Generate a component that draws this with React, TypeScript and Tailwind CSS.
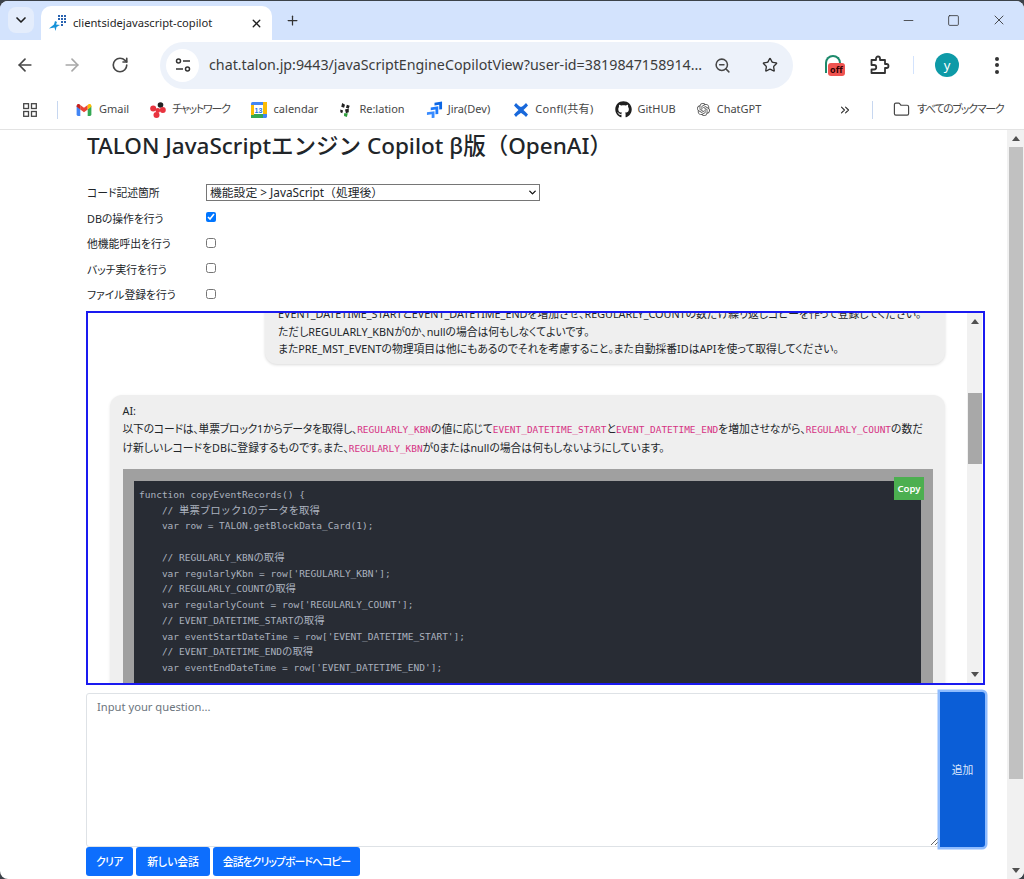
import { ArrowLeft, ArrowRight, ChevronDown, ChevronsRight, Folder, Minus, Plus, RotateCw, Square, Star, X, ZoomOut } from "lucide-react";
import { FaGithub } from "react-icons/fa";
import { SiOpenai } from "react-icons/si";

const sans = "font-['Noto_Sans','Noto_Sans_CJK_JP',sans-serif]";

const codeLines = [
  "function copyEventRecords() {",
  "    // 単票ブロック1のデータを取得",
  "    var row = TALON.getBlockData_Card(1);",
  "",
  "    // REGULARLY_KBNの取得",
  "    var regularlyKbn = row['REGULARLY_KBN'];",
  "    // REGULARLY_COUNTの取得",
  "    var regularlyCount = row['REGULARLY_COUNT'];",
  "    // EVENT_DATETIME_STARTの取得",
  "    var eventStartDateTime = row['EVENT_DATETIME_START'];",
  "    // EVENT_DATETIME_ENDの取得",
  "    var eventEndDateTime = row['EVENT_DATETIME_END'];",
];

// japanese runs sit a bit larger than the mono latin in the code block
function CodeLine({ text }: { text: string }) {
  const parts = text.split(/([\u3000-\u9fff]+)/);
  return (
    <div className="h-[15.750px]">
      {parts.map((p, i) => (i % 2 === 1 ? <span key={i} className="text-[10.400px]">{p}</span> : p))}
    </div>
  );
}

function Kbd({ children }: { children: string }) {
  return <code className="font-['DejaVu_Sans_Mono','Noto_Sans_CJK_JP',monospace] text-[9.450px] leading-none tracking-normal text-[#d63384]">{children}</code>;
}

function GmailIcon() {
  return (
    <svg viewBox="0 0 16 13" className="h-[12px] w-[16px]">
      <path d="M0 2v9.5A1.5 1.5 0 0 0 1.5 13H4V6z" fill="#4285f4" />
      <path d="M16 2v9.5a1.5 1.5 0 0 1-1.500 1.500H12V6z" fill="#34a853" />
      <path d="M4 6 8 9l4-3V1l-4 3-4-3z" fill="#ea4335" />
      <path d="M0 2c0-1.800 2-2.600 3-1.800L4 1v5L0 3z" fill="#c5221f" />
      <path d="M16 2c0-1.800-2-2.600-3-1.800L12 1v5l4-3z" fill="#fbbc04" />
    </svg>
  );
}

function ChatworkIcon() {
  return (
    <svg viewBox="0 0 16 16" className="h-4 w-4">
      <circle cx="10.500" cy="3" r="2.800" fill="#222" />
      <circle cx="3.200" cy="6.500" r="3" fill="#e8343f" />
      <circle cx="12.800" cy="8" r="3" fill="#e8343f" />
      <circle cx="7.800" cy="8.500" r="2.400" fill="#e8343f" />
      <circle cx="6.500" cy="13" r="3" fill="#e8343f" />
    </svg>
  );
}

function CalendarIcon() {
  return (
    <svg viewBox="0 0 16 16" className="h-4 w-4">
      <rect x="0" y="0" width="16" height="16" rx="1.500" fill="#4285f4" />
      <rect x="0" y="12" width="12" height="4" fill="#34a853" />
      <rect x="0" y="3" width="3" height="10" fill="#fbbc04" />
      <rect x="12" y="0" width="4" height="12" fill="#fbbc04" />
      <rect x="3" y="3" width="9" height="9" fill="#fff" />
      <text x="7.500" y="10.500" fontSize="7" fontWeight="700" textAnchor="middle" fill="#1a73e8" fontFamily="Liberation Sans">13</text>
    </svg>
  );
}

function RelationIcon() {
  return (
    <svg viewBox="0 0 12 16" className="h-[15px] w-[12px]">
      <path d="M3 1l3 2-1 3-3-1zM8 3l3 1-1 3-3-1zM1 8l3 1-1 3-2-1z" fill="#222" />
      <path d="M6 8l4-1 0 4-3 1z" fill="#222" />
      <path d="M5 12l4 0-1 4-3-1z" fill="#2e9e3c" />
    </svg>
  );
}

function JiraIcon() {
  return (
    <svg viewBox="0 0 18 18" className="h-[17px] w-[17px]">
      <path d="M9 1h8v8h-3V4H9z" fill="#0c66e4" transform="skewY(-8) translate(0 2)" />
      <path d="M5 5.500h8v8h-3v-5H5z" fill="#1d7afc" transform="skewY(-8) translate(0 2)" />
      <path d="M1 10h8v7H6v-4H1z" fill="#388bff" transform="skewY(-8) translate(0 2)" />
    </svg>
  );
}

function ConflIcon() {
  return (
    <svg viewBox="0 0 16 16" className="h-4 w-4">
      <path d="M1 3.500 3 1c3 3 4.500 4 5 4s2-1 5-4l2 2.500C12 6.500 11 7.500 10.500 8c.5.500 1.500 1.500 4.500 4.500L13 15c-3-3-4.500-4-5-4s-2 1-5 4l-2-2.500C4 9.500 5 8.500 5.500 8 5 7.500 4 6.500 1 3.500z" fill="#1868db" />
    </svg>
  );
}

function TalonIcon() {
  return (
    <svg viewBox="0 0 17 17" className="h-[17px] w-[17px]">
      <g fill="#2a63b0">
        <rect x="9" y="0" width="2" height="2" /><rect x="12" y="0" width="2" height="2" /><rect x="15" y="0" width="2" height="2" />
        <rect x="9" y="3" width="2" height="2" /><rect x="12" y="3" width="2" height="2" /><rect x="15" y="3" width="2" height="2" />
        <rect x="12" y="6" width="2" height="2" /><rect x="15" y="6" width="2" height="2" />
        <rect x="12" y="9" width="2" height="2" />
      </g>
      <path d="M0 13.500 5 9.500l1-3.500 2 1-1 2.500 4 .5-3.500 2-1 4-1-3.500z" fill="#1792d8" />
    </svg>
  );
}

function TuneIcon() {
  return (
    <svg viewBox="0 0 16 16" className="h-4 w-4" fill="none" stroke="#333" strokeWidth="1.500">
      <circle cx="3.500" cy="4" r="2" />
      <path d="M8 4h7" />
      <circle cx="12.500" cy="12" r="2" />
      <path d="M1 12h7" />
    </svg>
  );
}

function PuzzleIcon() {
  return (
    <svg viewBox="0 0 20 20" className="h-5 w-5" fill="none" stroke="#333" strokeWidth="1.800" strokeLinejoin="round">
      <path d="M1.500 5H6V3.500a2 2 0 0 1 4 0V5h5v4h1.500a2 2 0 0 1 0 4H15v5H1.500v-3.500H4a2.200 2.200 0 0 0 0-4.500H1.500z" />
    </svg>
  );
}

function AppsIcon() {
  return (
    <svg viewBox="0 0 14 14" className="h-[14px] w-[14px]" fill="none" stroke="#474747" strokeWidth="1.300">
      <rect x="0.700" y="0.700" width="4.800" height="4.800" />
      <rect x="8.500" y="0.700" width="4.800" height="4.800" />
      <rect x="0.700" y="8.500" width="4.800" height="4.800" />
      <rect x="8.500" y="8.500" width="4.800" height="4.800" />
    </svg>
  );
}

function Arrow({ up }: { up?: boolean }) {
  return (
    <svg viewBox="0 0 8 5" className="h-[5px] w-[8px]">
      <path d={up ? "M4 0l4 5H0z" : "M0 0h8L4 5z"} fill="#505050" />
    </svg>
  );
}

const bookmarks = [
  { icon: <GmailIcon />, label: "Gmail", cls: "gap-[7px]", text: "" },
  { icon: <ChatworkIcon />, label: "チャットワーク", cls: "gap-[6px]", text: "tracking-[-1.300px]" },
  { icon: <CalendarIcon />, label: "calendar", cls: "gap-[7px]", text: "" },
  { icon: <RelationIcon />, label: "Re:lation", cls: "gap-[8px]", text: "" },
  { icon: <JiraIcon />, label: "Jira(Dev)", cls: "mr-[2px] gap-[5px]", text: "" },
  { icon: <ConflIcon />, label: "Confl(共有)", cls: "gap-[6px]", text: "tracking-[0.300px]" },
  { icon: <FaGithub className="h-[17px] w-[17px] text-[#1f1f1f]" />, label: "GitHUB", cls: "gap-[6px]", text: "" },
  { icon: <SiOpenai className="h-[13px] w-[13px] text-[#555]" />, label: "ChatGPT", cls: "gap-[7px]", text: "" },
];

const options = ["DBの操作を行う", "他機能呼出を行う", "バッチ実行を行う", "ファイル登録を行う"];

export default function App() {
  return (
    <div className={`h-[879px] w-[1024px] overflow-hidden bg-[#3c4249] pt-px [font-feature-settings:'palt'] ${sans}`}>
      <div className="flex h-[878px] flex-col overflow-hidden rounded-[8px] bg-white">
        {/* tab strip */}
        <div className="flex h-[39px] items-end bg-[#d3e3fd] pl-2">
          <div className="mb-[7px] flex h-[26px] w-[26px] items-center justify-center rounded-[8px] bg-[#e4edfc]">
            <ChevronDown className="h-4 w-4 text-[#1f1f1f]" strokeWidth={2.500} />
          </div>
          <div className="ml-[7px] flex h-[34px] w-[231px] items-center rounded-t-[10px] bg-white pl-[8px] pr-[9px]">
            <TalonIcon />
            <span className="ml-[7px] flex-1 text-[11.200px] text-[#1f1f1f]">clientsidejavascript-copilot</span>
            <X className="h-[13px] w-[13px] text-[#1f1f1f]" strokeWidth={2.500} />
          </div>
          <Plus className="mb-[12px] ml-[13px] h-[15px] w-[15px] text-[#333]" strokeWidth={2} />
          <div className="mb-[12px] ml-auto flex items-center gap-[31px] pr-[17px]">
            <Minus className="h-[15px] w-[15px] text-[#333]" strokeWidth={1.300} />
            <Square className="h-[13px] w-[13px] text-[#333]" strokeWidth={1.500} />
            <X className="h-[16px] w-[16px] text-[#333]" strokeWidth={1.300} />
          </div>
        </div>

        {/* toolbar */}
        <div className="flex h-[50px] items-center bg-white">
          <ArrowLeft className="ml-[15px] h-[20px] w-[20px] text-[#474747]" strokeWidth={2} />
          <ArrowRight className="ml-[27px] h-[20px] w-[20px] text-[#a8a8a8]" strokeWidth={2} />
          <RotateCw className="ml-[29px] h-[18px] w-[18px] text-[#474747]" strokeWidth={2.200} />
          <div className="ml-[31px] flex h-[47px] w-[633px] items-center rounded-full bg-[#edf2fa] pl-[6px]">
            <div className="flex h-[33px] w-[33px] items-center justify-center rounded-full bg-white">
              <TuneIcon />
            </div>
            <span className="ml-[10px] w-[505px] whitespace-nowrap text-[14.250px] text-[#3c3c3c] [font-feature-settings:normal]">chat.talon.jp:9443/javaScriptEngineCopilotView?user-id=3819847158914...</span>
            <ZoomOut className="h-[17px] w-[17px] text-[#474747]" strokeWidth={2.200} />
            <Star className="ml-[31px] h-[16px] w-[16px] text-[#333]" strokeWidth={2} />
          </div>
          <div className="relative ml-[32px] h-[20px] w-[20px]">
            <div className="h-[18px] w-[16px] rounded-t-full border-[2.500px] border-b-0 border-[#1d8a6b]" />
            <span className="absolute left-[3px] top-[8px] rounded-[3px] bg-[#ef5350] px-[2px] text-[9px] font-bold leading-[13px] text-[#300]">off</span>
          </div>
          <div className="ml-[25px]"><PuzzleIcon /></div>
          <div className="ml-[23px] h-[18px] w-px bg-[#d3e3fd]" />
          <div className="ml-[21px] flex h-[24px] w-[24px] items-center justify-center rounded-full bg-[#0e9aa7] text-[13px] leading-[20px] text-white">y</div>
          <div className="ml-[36px] flex flex-col gap-[2.500px]">
            <div className="h-[4px] w-[4px] rounded-full bg-[#333]" />
            <div className="h-[4px] w-[4px] rounded-full bg-[#333]" />
            <div className="h-[4px] w-[4px] rounded-full bg-[#333]" />
          </div>
        </div>

        {/* bookmarks */}
        <div className="flex h-[40px] items-center border-b border-[#e3e3e3] text-[11px] text-[#474747]">
          <div className="ml-[23px]"><AppsIcon /></div>
          <div className="ml-[20px] h-[18px] w-px bg-[#c7d7f0]" />
          <div className="ml-[18px] flex w-[686px] items-center gap-[21px]">
            {bookmarks.map((b) => (
              <div key={b.label} className={`flex items-center whitespace-nowrap ${b.cls}`}>
                {b.icon}
                <span className={b.text}>{b.label}</span>
              </div>
            ))}
          </div>
          <ChevronsRight className="ml-[76px] h-[14px] w-[14px] text-[#333]" strokeWidth={2} />
          <div className="ml-[20px] h-[18px] w-px bg-[#c7d7f0]" />
          <Folder className="ml-[20px] h-[17px] w-[17px] text-[#474747]" strokeWidth={1.700} />
          <span className="ml-[7px] whitespace-nowrap tracking-[-1.300px]">すべてのブックマーク</span>
        </div>

        {/* page */}
        <div className="flex min-h-0 flex-1">
          <div className="min-w-0 flex-1 pl-[86px] pr-[22px] text-[#212529]">
            <h1 className="pl-px text-[22.500px] font-medium leading-[31px] [font-feature-settings:normal]">TALON JavaScriptエンジン Copilot β版（OpenAI）</h1>

            <div className="mt-[20px] flex h-[25px] items-center text-[10.800px]">
              <span className="w-[120px] pl-px">コード記述箇所</span>
              <div className="relative -mt-[2px] h-[17px] w-[334px]">
                <select className="h-[17px] w-full appearance-none border border-[#767676] bg-white pl-[3px] text-[11.800px] leading-[15px] [font-feature-settings:normal]">
                  <option>機能設定 &gt; JavaScript（処理後）</option>
                </select>
                <ChevronDown className="pointer-events-none absolute right-[2px] top-[3px] h-[11px] w-[11px] text-[#111]" strokeWidth={3} />
              </div>
            </div>
            {options.map((label, i) => (
              <div key={label} className="flex h-[25.600px] items-center text-[10.800px]">
                <span className="w-[120px] pl-px">{label}</span>
                <input type="checkbox" defaultChecked={i === 0} className="-mt-[3px] h-[10px] w-[10px]" />
              </div>
            ))}

            {/* chat log */}
            <div className="mt-[3px] flex h-[374px] overflow-hidden border-2 border-[#1a1af0] bg-white">
              <div className="min-w-0 flex-1 overflow-hidden pl-[22px] pr-[22px] text-[10.800px] leading-[17.500px]">
                <div className="-mt-[10px] ml-auto w-[680px] rounded-b-[12px] bg-[#efefef] px-[13px] pb-[6px] pt-[2px] shadow-[0_1px_3px_rgba(0,0,0,0.15)]">
                  <div className="whitespace-nowrap">EVENT_DATETIME_STARTとEVENT_DATETIME_ENDを増加させ、REGULARLY_COUNTの数だけ繰り返しコピーを作って登録してください。</div>
                  <div>ただしREGULARLY_KBNが0か、nullの場合は何もしなくてよいです。</div>
                  <div>またPRE_MST_EVENTの物理項目は他にもあるのでそれを考慮すること。また自動採番IDはAPIを使って取得してください。</div>
                </div>

                <div className="mt-[31px] rounded-[12px] bg-[#efefef] px-[12.500px] pt-[7px] leading-[18.500px] shadow-[0_1px_3px_rgba(0,0,0,0.1)]">
                  <div>AI:</div>
                  <div className="pr-[6px]">
                    <span className="tracking-[-0.200px]">以下のコードは、単票ブロック1からデータを取得し、</span><Kbd>REGULARLY_KBN</Kbd>の値に応じて<Kbd>EVENT_DATETIME_START</Kbd>と<Kbd>EVENT_DATETIME_END</Kbd>を増加させながら、<Kbd>REGULARLY_COUNT</Kbd>の数だけ新しいレコードをDBに登録するものです。また、<Kbd>REGULARLY_KBN</Kbd>が0またはnullの場合は何もしないようにしています。
                  </div>
                  <div className="relative mt-[12px] bg-[#a0a0a0] p-[11.500px] pb-[40px]">
                    <pre className="bg-[#282c34] px-[5px] pb-[30px] pt-[6px] font-['DejaVu_Sans_Mono','Noto_Sans_CJK_JP',monospace] text-[9.500px] leading-[15.750px] text-[#abb2bf] [font-feature-settings:normal]">
                      {codeLines.map((line, i) => (
                        <CodeLine key={i} text={line} />
                      ))}
                    </pre>
                    <span className="absolute right-[9px] top-[8px] bg-[#4caf50] px-[3px] py-[3px] text-[9.600px] font-semibold leading-[17px] text-white">Copy</span>
                  </div>
                </div>
              </div>
              <div className="mr-px flex w-[15px] shrink-0 flex-col items-center bg-[#f1f1f1]">
                <div className="flex h-[17px] items-center justify-center"><Arrow up /></div>
                <div className="mt-[63px] h-[71px] w-[14px] bg-[#a8a8a8]" />
                <div className="mt-auto flex h-[17px] items-center justify-center"><Arrow /></div>
              </div>
            </div>

            {/* input */}
            <div className="mt-[7px] flex h-[155px] items-stretch">
              <textarea
                placeholder="Input your question..."
                className="mt-px min-w-0 flex-1 rounded-l-[3px] border border-[#dee2e6] px-[10px] py-[5px] text-[11.200px] leading-[16.800px] outline-none placeholder:text-[#6c757d]"
              />
              <button className="w-[45px] rounded-r-[3px] bg-[#0b5ed7] text-[10.800px] text-[#dbe7fb] shadow-[0_0_0_2.500px_#8fbcfe]">追加</button>
            </div>
            <div className="flex gap-[3px] text-[10.800px] font-medium text-white">
              <button className="h-[29px] w-[47px] rounded-[3px] bg-[#0d6efd] tracking-[-0.500px]">クリア</button>
              <button className="h-[29px] w-[74px] rounded-[3px] bg-[#0d6efd]">新しい会話</button>
              <button className="h-[29px] w-[147px] whitespace-nowrap rounded-[3px] bg-[#0d6efd] tracking-[-0.900px]">会話をクリップボードへコピー</button>
            </div>
          </div>

          {/* page scrollbar */}
          <div className="flex w-[17px] shrink-0 flex-col items-center bg-[#f1f1f1]">
            <div className="flex h-[17px] items-center justify-center"><Arrow up /></div>
            <div className="h-[632px] w-[14px] bg-[#c1c1c1]" />
            <div className="mt-auto flex h-[17px] items-center justify-center"><Arrow /></div>
          </div>
        </div>
      </div>
    </div>
  );
}
